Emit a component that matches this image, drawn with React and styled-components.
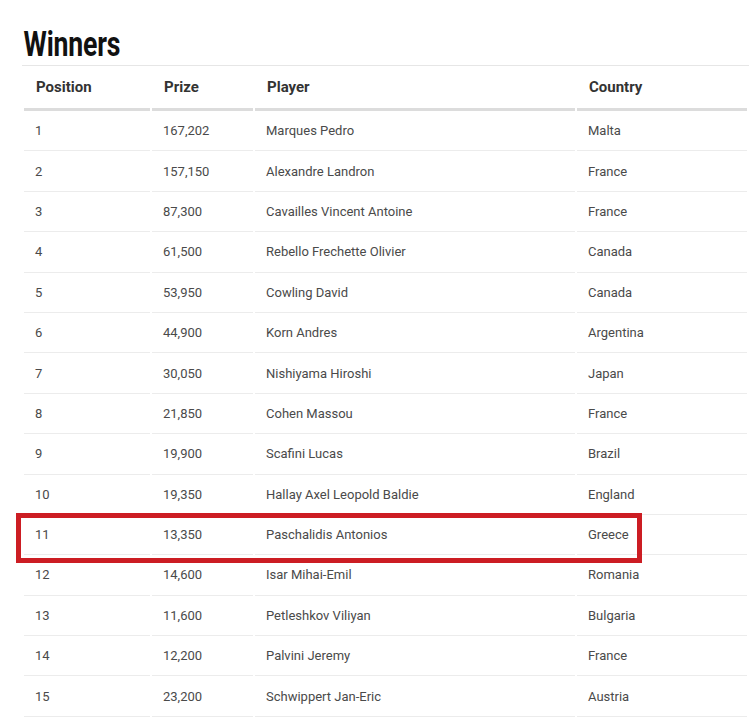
import styled, { createGlobalStyle } from 'styled-components';

const GlobalStyle = createGlobalStyle`
	body {
		margin: 0;
		background: #fff;
		font-family: Roboto, 'Liberation Sans', Arial, sans-serif;
	}
`;

const Page = styled.div`
	position: relative;
	padding: 0 0 0 22px;
`;

const Title = styled.h2`
	margin: 0;
	padding: 25px 0 0 2px;
	height: 40px;
	font-family: Roboto, 'Liberation Sans', sans-serif;
	font-weight: 700;
	font-size: 35px;
	line-height: 40px;
	color: #111;
	letter-spacing: -0.2px;
	transform: scaleX(0.76);
	transform-origin: left center;
`;

const Table = styled.table`
	width: 727px;
	border-collapse: separate;
	border-spacing: 2px 0;
	border-top: 1px solid #e6e6e6;
	table-layout: fixed;
`;

const Th = styled.th`
	box-sizing: border-box;
	width: ${(p) => p.$w}px;
	height: 45px;
	padding: 0 12px;
	text-align: left;
	font-size: 15px;
	font-weight: 700;
	color: #333;
	border-bottom: 3px solid #dcdcdc;
	vertical-align: middle;
`;

const Td = styled.td`
	height: 39.4px;
	padding: 0 11px;
	font-size: 13px;
	color: #4a4a4a;
	border-bottom: 1px solid #ececec;
	vertical-align: middle;
	white-space: nowrap;
`;

const Highlight = styled.div`
	position: absolute;
	left: 16px;
	top: 513px;
	width: 616px;
	height: 40px;
	border: 5px solid #cc1d23;
	pointer-events: none;
`;

const winners = [
	['1', '167,202', 'Marques Pedro', 'Malta'],
	['2', '157,150', 'Alexandre Landron', 'France'],
	['3', '87,300', 'Cavailles Vincent Antoine', 'France'],
	['4', '61,500', 'Rebello Frechette Olivier', 'Canada'],
	['5', '53,950', 'Cowling David', 'Canada'],
	['6', '44,900', 'Korn Andres', 'Argentina'],
	['7', '30,050', 'Nishiyama Hiroshi', 'Japan'],
	['8', '21,850', 'Cohen Massou', 'France'],
	['9', '19,900', 'Scafini Lucas', 'Brazil'],
	['10', '19,350', 'Hallay Axel Leopold Baldie', 'England'],
	['11', '13,350', 'Paschalidis Antonios', 'Greece'],
	['12', '14,600', 'Isar Mihai-Emil', 'Romania'],
	['13', '11,600', 'Petleshkov Viliyan', 'Bulgaria'],
	['14', '12,200', 'Palvini Jeremy', 'France'],
	['15', '23,200', 'Schwippert Jan-Eric', 'Austria'],
];

const columns = [
	['Position', 126],
	['Prize', 101],
	['Player', 320],
	['Country', 170],
];

export default function App() {
	return (
		<Page>
			<GlobalStyle />
			<Title>Winners</Title>
			<Table>
				<thead>
					<tr>
						{columns.map(([label, w]) => (
							<Th key={label} $w={w}>
								{label}
							</Th>
						))}
					</tr>
				</thead>
				<tbody>
					{winners.map((row) => (
						<tr key={row[0]}>
							{row.map((cell, i) => (
								<Td key={i}>{cell}</Td>
							))}
						</tr>
					))}
				</tbody>
			</Table>
			<Highlight />
		</Page>
	);
}
